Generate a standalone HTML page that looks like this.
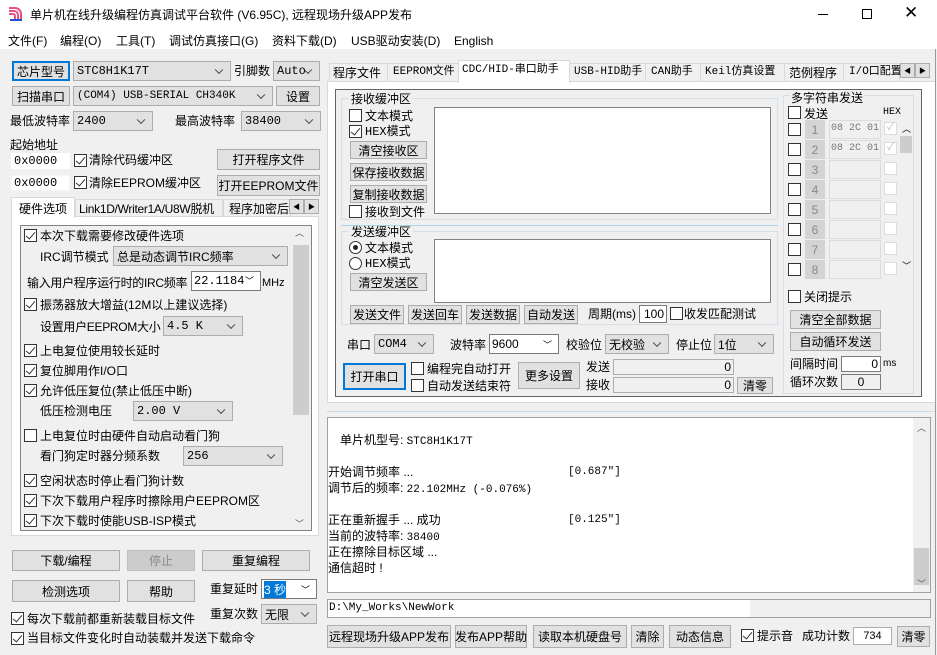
<!DOCTYPE html>
<html><head><meta charset="utf-8">
<style>
*{box-sizing:border-box;margin:0;padding:0}
body{width:937px;height:655px;overflow:hidden;background:#f0f0f0;font-family:"Liberation Sans","Noto Sans CJK SC",sans-serif;font-size:12px;color:#000;position:relative}
.a{position:absolute;white-space:nowrap;line-height:1}
.t{position:absolute;white-space:nowrap;line-height:14px}
.b{position:absolute;background:#e1e1e1;border:1px solid #adadad;text-align:center;white-space:nowrap;display:flex;align-items:center;justify-content:center}
.f{border:2px solid #0078d7}
.c{position:absolute;background:#e1e1e1;border:1px solid #adadad;white-space:nowrap;padding-left:3px;display:flex;align-items:center;font-family:"Liberation Mono","Noto Sans CJK SC",monospace;overflow:hidden}
.c::after{content:"";position:absolute;right:8px;top:50%;width:5px;height:5px;border-right:1px solid #444;border-bottom:1px solid #444;transform:translateY(-70%) rotate(45deg)}
.e{position:absolute;background:#fff;border:1px solid #7a7a7a;white-space:nowrap;display:flex;align-items:center;padding:0 2px}
.k{position:absolute;width:13px;height:13px;background:#fff;border:1px solid #333}
.k.on::after{content:"";position:absolute;left:3px;top:0px;width:4px;height:8px;border-right:1.5px solid #333;border-bottom:1.5px solid #333;transform:rotate(40deg)}
.r{position:absolute;width:13px;height:13px;background:#fff;border:1px solid #333;border-radius:50%}
.w{position:absolute;background:#fff;border:1px solid #828282}
.g{position:absolute;border:1px solid #d5dfe5}
.mono{font-family:"Liberation Mono","Noto Sans CJK SC",monospace}
</style></head><body>
<!-- title -->
<div style="position:absolute;left:0;top:0;width:937px;height:49px;background:#fff"></div>
<svg style="position:absolute;left:8px;top:6px" width="16" height="16"><path d="M1 2h6a6 6 0 0 1 6 6v6M1 5h5a4 4 0 0 1 4 4v5M1 8h4a2 2 0 0 1 2 2v4" stroke="#e8508a" stroke-width="2" fill="none"/><path d="M2 14h12" stroke="#2050d0" stroke-width="2"/></svg>
<div class="a" style="left:30px;top:9px;font-size:12px">单片机在线升级编程仿真调试平台软件 (V6.95C), 远程现场升级APP发布</div>
<div class="a" style="left:818px;top:14px;width:10px;border-top:1px solid #000"></div>
<div class="a" style="left:862px;top:9px;width:10px;height:10px;border:1px solid #000"></div>
<div class="a" style="left:904px;top:4px;font-size:17px;font-weight:300">✕</div>
<div class="a" style="left:8px;top:35px">文件(F)</div>
<div class="a" style="left:60px;top:35px">编程(O)</div>
<div class="a" style="left:116px;top:35px">工具(T)</div>
<div class="a" style="left:169px;top:35px">调试仿真接口(G)</div>
<div class="a" style="left:272px;top:35px">资料下载(D)</div>
<div class="a" style="left:351px;top:35px">USB驱动安装(D)</div>
<div class="a" style="left:454px;top:35px">English</div>

<!-- left top -->
<div class="b f" style="left:12px;top:61px;width:58px;height:20px">芯片型号</div>
<div class="c" style="left:73px;top:61px;width:158px;height:20px">STC8H1K17T</div>
<div class="a" style="left:234px;top:65px">引脚数</div>
<div class="c" style="left:273px;top:61px;width:47px;height:20px">Auto</div>
<div class="b" style="left:12px;top:86px;width:58px;height:20px">扫描串口</div>
<div class="c" style="left:73px;top:86px;width:200px;height:20px;font-size:11px">(COM4) USB-SERIAL CH340K</div>
<div class="b" style="left:276px;top:86px;width:44px;height:20px">设置</div>
<div class="a" style="left:10px;top:115px">最低波特率</div>
<div class="c" style="left:73px;top:111px;width:80px;height:20px">2400</div>
<div class="a" style="left:175px;top:115px">最高波特率</div>
<div class="c" style="left:241px;top:111px;width:80px;height:20px">38400</div>
<div class="a" style="left:10px;top:139px">起始地址</div>
<div class="e mono" style="left:11px;top:153px;width:59px;height:16px;border-color:#fff">0x0000</div>
<div class="k on" style="left:74px;top:154px"></div><div class="a" style="left:89px;top:154px">清除代码缓冲区</div>
<div class="b" style="left:217px;top:149px;width:103px;height:21px">打开程序文件</div>
<div class="e mono" style="left:11px;top:175px;width:59px;height:16px;border-color:#f6f6f6">0x0000</div>
<div class="k on" style="left:74px;top:176px"></div><div class="a" style="left:89px;top:177px">清除EEPROM缓冲区</div>
<div class="b" style="left:217px;top:175px;width:103px;height:21px">打开EEPROM文件</div>
<!-- left tabs -->
<div class="a" style="left:11px;top:216px;width:308px;height:320px;background:#fff;border:1px solid #d9d9d9"></div>
<div class="a" style="left:75px;top:199px;width:148px;height:18px;border:1px solid #d9d9d9;background:#f0f0f0"></div>
<div class="a" style="left:79px;top:203px;letter-spacing:-0.3px">Link1D/Writer1A/U8W脱机</div>
<div class="a" style="left:223px;top:199px;width:68px;height:18px;border:1px solid #d9d9d9;background:#f0f0f0;overflow:hidden;padding:3px 0 0 5px">程序加密后</div>
<div class="a" style="left:11px;top:197px;width:64px;height:21px;background:#fff;border:1px solid #d9d9d9;border-bottom:none;padding:5px 0 0 7px">硬件选项</div>
<div class="b" style="left:289px;top:199px;width:15px;height:15px;font-size:7px">◀</div>
<div class="b" style="left:304px;top:199px;width:15px;height:15px;font-size:7px">▶</div>
<div class="a" style="left:20px;top:225px;width:292px;height:306px;background:#f0f0f0;border:1px solid #828282"></div>
<div class="a" style="left:292px;top:226px;width:18px;height:304px;background:#f0f0f0"></div>
<div class="a" style="left:293px;top:245px;width:16px;height:170px;background:#cdcdcd"></div>
<div class="a" style="left:295px;top:229px;font-size:9px;color:#555">︿</div>
<div class="a" style="left:295px;top:520px;font-size:9px;color:#555">﹀</div>
<div class="k on" style="left:24px;top:229px"></div><div class="a" style="left:40px;top:230px">本次下载需要修改硬件选项</div>
<div class="a" style="left:40px;top:251px">IRC调节模式</div>
<div class="c" style="left:113px;top:246px;width:175px;height:20px;font-family:inherit">总是动态调节IRC频率</div>
<div class="a" style="left:27px;top:277px;letter-spacing:-0.3px">输入用户程序运行时的IRC频率</div>
<div class="e mono" style="left:191px;top:271px;width:70px;height:20px">22.1184<span style="position:absolute;right:6px;top:2px;font-size:9px">﹀</span></div>
<div class="a" style="left:262px;top:278px;font-size:11px">MHz</div>
<div class="k on" style="left:24px;top:298px"></div><div class="a" style="left:40px;top:299px">振荡器放大增益(12M以上建议选择)</div>
<div class="a" style="left:40px;top:321px;letter-spacing:-0.3px">设置用户EEPROM大小</div>
<div class="c" style="left:163px;top:316px;width:80px;height:20px">4.5 K</div>
<div class="k on" style="left:24px;top:344px"></div><div class="a" style="left:40px;top:345px">上电复位使用较长延时</div>
<div class="k on" style="left:24px;top:364px"></div><div class="a" style="left:40px;top:365px">复位脚用作I/O口</div>
<div class="k on" style="left:24px;top:384px"></div><div class="a" style="left:40px;top:385px">允许低压复位(禁止低压中断)</div>
<div class="a" style="left:40px;top:405px">低压检测电压</div>
<div class="c" style="left:133px;top:401px;width:100px;height:20px">2.00 V</div>
<div class="k" style="left:24px;top:429px"></div><div class="a" style="left:40px;top:430px">上电复位时由硬件自动启动看门狗</div>
<div class="a" style="left:40px;top:450px">看门狗定时器分频系数</div>
<div class="c" style="left:183px;top:446px;width:100px;height:20px">256</div>
<div class="k on" style="left:24px;top:474px"></div><div class="a" style="left:40px;top:475px">空闲状态时停止看门狗计数</div>
<div class="k on" style="left:24px;top:494px"></div><div class="a" style="left:40px;top:495px">下次下载用户程序时擦除用户EEPROM区</div>
<div class="k on" style="left:24px;top:514px"></div><div class="a" style="left:40px;top:515px">下次下载时使能USB-ISP模式</div>

<div class="b" style="left:12px;top:550px;width:108px;height:21px">下载/编程</div>
<div class="b" style="left:127px;top:550px;width:68px;height:21px;background:#cccccc;border-color:#bfbfbf;color:#8a8a8a">停止</div>
<div class="b" style="left:202px;top:550px;width:108px;height:21px">重复编程</div>
<div class="b" style="left:12px;top:580px;width:108px;height:22px">检测选项</div>
<div class="b" style="left:127px;top:580px;width:68px;height:22px">帮助</div>
<div class="a" style="left:210px;top:583px">重复延时</div>
<div class="e" style="left:261px;top:579px;width:56px;height:20px"><span style="background:#0078d7;color:#fff">3 秒</span><span style="position:absolute;right:6px;top:3px;font-size:9px">﹀</span></div>
<div class="a" style="left:210px;top:608px">重复次数</div>
<div class="c" style="left:261px;top:604px;width:56px;height:20px;font-family:inherit">无限</div>
<div class="k on" style="left:11px;top:612px"></div><div class="a" style="left:27px;top:613px">每次下载前都重新装载目标文件</div>
<div class="k on" style="left:11px;top:632px"></div><div class="a" style="left:27px;top:632px">当目标文件变化时自动装载并发送下载命令</div>

<!-- right tabs -->
<div class="a" style="left:327px;top:81px;width:609px;height:322px;background:#fff;border:1px solid #d9d9d9"></div>
<div class="a" style="left:329px;top:63px;width:571px;height:19px;border:1px solid #d9d9d9;background:#f0f0f0"></div>
<div class="a" style="left:333px;top:67px">程序文件</div>
<div class="a" style="left:387px;top:63px;height:19px;border-left:1px solid #d9d9d9"></div>
<div class="a mono" style="left:393px;top:67px;font-size:11px">EEPROM文件</div>
<div class="a" style="left:458px;top:60px;width:112px;height:23px;background:#fff;border:1px solid #d9d9d9;border-bottom:none"></div>
<div class="a mono" style="left:462px;top:65px;font-size:11px">CDC/HID-串口助手</div>
<div class="a mono" style="left:574px;top:67px;font-size:11px">USB-HID助手</div>
<div class="a" style="left:645px;top:63px;height:19px;border-left:1px solid #d9d9d9"></div>
<div class="a mono" style="left:651px;top:67px;font-size:11px">CAN助手</div>
<div class="a" style="left:700px;top:63px;height:19px;border-left:1px solid #d9d9d9"></div>
<div class="a mono" style="left:705px;top:67px;font-size:11px">Keil仿真设置</div>
<div class="a" style="left:784px;top:63px;height:19px;border-left:1px solid #d9d9d9"></div>
<div class="a" style="left:789px;top:67px">范例程序</div>
<div class="a" style="left:843px;top:63px;height:19px;border-left:1px solid #d9d9d9"></div>
<div class="a mono" style="left:849px;top:67px;font-size:11px">I/O口配置</div>
<div class="b" style="left:900px;top:63px;width:15px;height:15px;font-size:7px">◀</div>
<div class="b" style="left:915px;top:63px;width:15px;height:15px;font-size:7px">▶</div>

<div class="a" style="left:335px;top:89px;width:587px;height:308px;background:#f0f0f0;border:1px solid #646464"></div>
<div class="g" style="left:341px;top:98px;width:437px;height:122px"></div>
<div class="a" style="left:349px;top:93px;background:#f0f0f0;padding:0 2px">接收缓冲区</div>
<div class="k" style="left:349px;top:109px"></div><div class="a" style="left:365px;top:110px">文本模式</div>
<div class="k on" style="left:349px;top:125px"></div><div class="a mono" style="left:365px;top:126px">HEX模式</div>
<div class="b" style="left:350px;top:141px;width:77px;height:18px">清空接收区</div>
<div class="b" style="left:350px;top:163px;width:77px;height:18px">保存接收数据</div>
<div class="b" style="left:350px;top:185px;width:77px;height:18px">复制接收数据</div>
<div class="k" style="left:349px;top:205px"></div><div class="a" style="left:365px;top:206px">接收到文件</div>
<div class="w" style="left:434px;top:107px;width:337px;height:107px"></div>
<div class="a" style="left:341px;top:225px;width:437px;border-top:1px solid #a8d4ec"></div>
<div class="g" style="left:341px;top:231px;width:437px;height:94px"></div>
<div class="a" style="left:349px;top:226px;background:#f0f0f0;padding:0 2px">发送缓冲区</div>
<div class="r" style="left:349px;top:241px"><div style="position:absolute;left:3px;top:3px;width:5px;height:5px;border-radius:50%;background:#222"></div></div><div class="a" style="left:365px;top:242px">文本模式</div>
<div class="r" style="left:349px;top:257px"></div><div class="a mono" style="left:365px;top:258px">HEX模式</div>
<div class="b" style="left:350px;top:273px;width:77px;height:18px">清空发送区</div>
<div class="w" style="left:434px;top:239px;width:337px;height:64px"></div>
<div class="b" style="left:350px;top:305px;width:54px;height:19px">发送文件</div>
<div class="b" style="left:408px;top:305px;width:54px;height:19px">发送回车</div>
<div class="b" style="left:466px;top:305px;width:54px;height:19px">发送数据</div>
<div class="b" style="left:524px;top:305px;width:54px;height:19px">自动发送</div>
<div class="a" style="left:588px;top:308px">周期(ms)</div>
<div class="e" style="left:639px;top:305px;width:28px;height:18px;justify-content:flex-end">100</div>
<div class="k" style="left:670px;top:307px"></div><div class="a" style="left:684px;top:308px">收发匹配测试</div>

<div class="a" style="left:347px;top:339px">串口</div>
<div class="c" style="left:374px;top:334px;width:60px;height:20px">COM4</div>
<div class="a" style="left:450px;top:339px">波特率</div>
<div class="e" style="left:489px;top:334px;width:70px;height:20px">9600<span style="position:absolute;right:6px;top:3px;font-size:9px">﹀</span></div>
<div class="a" style="left:566px;top:339px">校验位</div>
<div class="c" style="left:605px;top:334px;width:64px;height:20px;font-family:inherit">无校验</div>
<div class="a" style="left:676px;top:339px">停止位</div>
<div class="c" style="left:714px;top:334px;width:60px;height:20px;font-family:inherit">1位</div>
<div class="b f" style="left:343px;top:363px;width:63px;height:27px">打开串口</div>
<div class="k" style="left:411px;top:362px"></div><div class="a" style="left:427px;top:363px">编程完自动打开</div>
<div class="k" style="left:411px;top:379px"></div><div class="a" style="left:427px;top:380px">自动发送结束符</div>
<div class="b" style="left:518px;top:362px;width:62px;height:27px">更多设置</div>
<div class="a" style="left:586px;top:361px">发送</div>
<div class="e" style="left:613px;top:359px;width:121px;height:16px;justify-content:flex-end;background:#f0f0f0;border-color:#adadad">0</div>
<div class="a" style="left:586px;top:379px">接收</div>
<div class="e" style="left:613px;top:377px;width:121px;height:16px;justify-content:flex-end;background:#f0f0f0;border-color:#adadad">0</div>
<div class="b" style="left:737px;top:377px;width:36px;height:17px">清零</div>

<!-- multi string -->
<div class="g" style="left:783px;top:95px;width:131px;height:299px"></div>
<div class="a" style="left:790px;top:92px;background:#f0f0f0;padding:0 1px">多字符串发送</div>
<div class="k" style="left:788px;top:106px"></div><div class="a" style="left:804px;top:108px">发送</div>
<div class="a mono" style="left:883px;top:108px;font-size:10px">HEX</div>
<div class="a" style="left:900px;top:136px;width:12px;height:17px;background:#cdcdcd"></div>
<div class="a" style="left:902px;top:125px;font-size:9px">︿</div>
<div class="a" style="left:902px;top:262px;font-size:9px">﹀</div>
<div id="rows"></div>
<div class="k" style="left:788px;top:290px"></div><div class="a" style="left:804px;top:291px">关闭提示</div>
<div class="b" style="left:790px;top:310px;width:91px;height:19px">清空全部数据</div>
<div class="b" style="left:790px;top:332px;width:91px;height:19px">自动循环发送</div>
<div class="a" style="left:790px;top:358px">间隔时间</div>
<div class="e" style="left:841px;top:356px;width:40px;height:16px;justify-content:flex-end">0</div>
<div class="a" style="left:883px;top:359px;font-size:10px">ms</div>
<div class="a" style="left:790px;top:376px">循环次数</div>
<div class="e" style="left:841px;top:374px;width:40px;height:16px;justify-content:center;background:#f0f0f0">0</div>

<!-- output -->
<div class="a" style="left:327px;top:411px;width:609px;border-top:1px solid #c6dced"></div>
<div class="a" style="left:327px;top:417px;width:604px;height:176px;background:#fff;border:1px solid #a0a0a0"></div>
<div class="a" style="left:913px;top:418px;width:17px;height:174px;background:#f0f0f0"></div>
<div class="a" style="left:914px;top:548px;width:15px;height:37px;background:#cdcdcd"></div>
<div class="a" style="left:917px;top:424px;font-size:9px;color:#555">︿</div>
<div class="a" style="left:917px;top:580px;font-size:9px;color:#555">﹀</div>
<div class="t" style="left:340px;top:433px">单片机型号: <span class="mono" style="font-size:11px">STC8H1K17T</span></div>
<div class="t" style="left:328px;top:465px">开始调节频率 ...</div><div class="t mono" style="left:568px;top:465px;font-size:11px">[0.687"]</div>
<div class="t" style="left:328px;top:481px">调节后的频率: <span class="mono" style="font-size:11px">22.102MHz (-0.076%)</span></div>
<div class="t" style="left:328px;top:513px">正在重新握手 ... 成功</div><div class="t mono" style="left:568px;top:513px;font-size:11px">[0.125"]</div>
<div class="t" style="left:328px;top:529px">当前的波特率: <span class="mono" style="font-size:11px">38400</span></div>
<div class="t" style="left:328px;top:545px">正在擦除目标区域 ...</div>
<div class="t" style="left:328px;top:561px">通信超时 !</div>
<div class="a" style="left:327px;top:599px;width:604px;height:19px;border:1px solid #a0a0a0;background:#f0f0f0"></div>
<div class="a mono" style="left:328px;top:600px;width:422px;height:17px;background:#fff;font-size:11px;padding:3px 1px">D:\My_Works\NewWork</div>
<div class="b" style="left:327px;top:625px;width:124px;height:23px">远程现场升级APP发布</div>
<div class="b" style="left:455px;top:625px;width:72px;height:23px">发布APP帮助</div>
<div class="b" style="left:533px;top:625px;width:94px;height:23px">读取本机硬盘号</div>
<div class="b" style="left:631px;top:625px;width:33px;height:23px">清除</div>
<div class="b" style="left:669px;top:625px;width:62px;height:23px">动态信息</div>
<div class="k on" style="left:741px;top:629px"></div><div class="a" style="left:757px;top:630px">提示音</div>
<div class="a" style="left:802px;top:630px">成功计数</div>
<div class="e" style="left:853px;top:627px;width:39px;height:18px;justify-content:center;font-size:11px;border-color:#adadad">734</div>
<div class="b" style="left:897px;top:626px;width:33px;height:21px">清零</div>
<div class="a" style="left:935px;top:49px;width:1px;height:606px;background:#999"></div>
<script>
var h='';
for(var i=0;i<8;i++){var y=123+i*20;
h+='<div class="k" style="left:788px;top:'+y+'px"></div>';
h+='<div class="a" style="left:805px;top:'+(y-3)+'px;width:20px;height:19px;background:#d4d4d4;color:#888;text-align:center;padding-top:4px">'+(i+1)+'</div>';
h+='<div class="a mono" style="left:829px;top:'+(y-3)+'px;width:52px;height:19px;background:#f0f0f0;border:1px solid #dcdcdc;color:#777;font-size:10px;padding:3px 1px;overflow:hidden">'+(i<2?'08 2C 01':'')+'</div>';
h+='<div class="a" style="left:884px;top:'+(y-1)+'px;width:13px;height:13px;background:#fff;border:1px solid #dcdcdc;color:#bbb;font-size:10px;text-align:center">'+(i<2?'✓':'')+'</div>';}
document.getElementById('rows').innerHTML=h;
</script>
</body></html>
